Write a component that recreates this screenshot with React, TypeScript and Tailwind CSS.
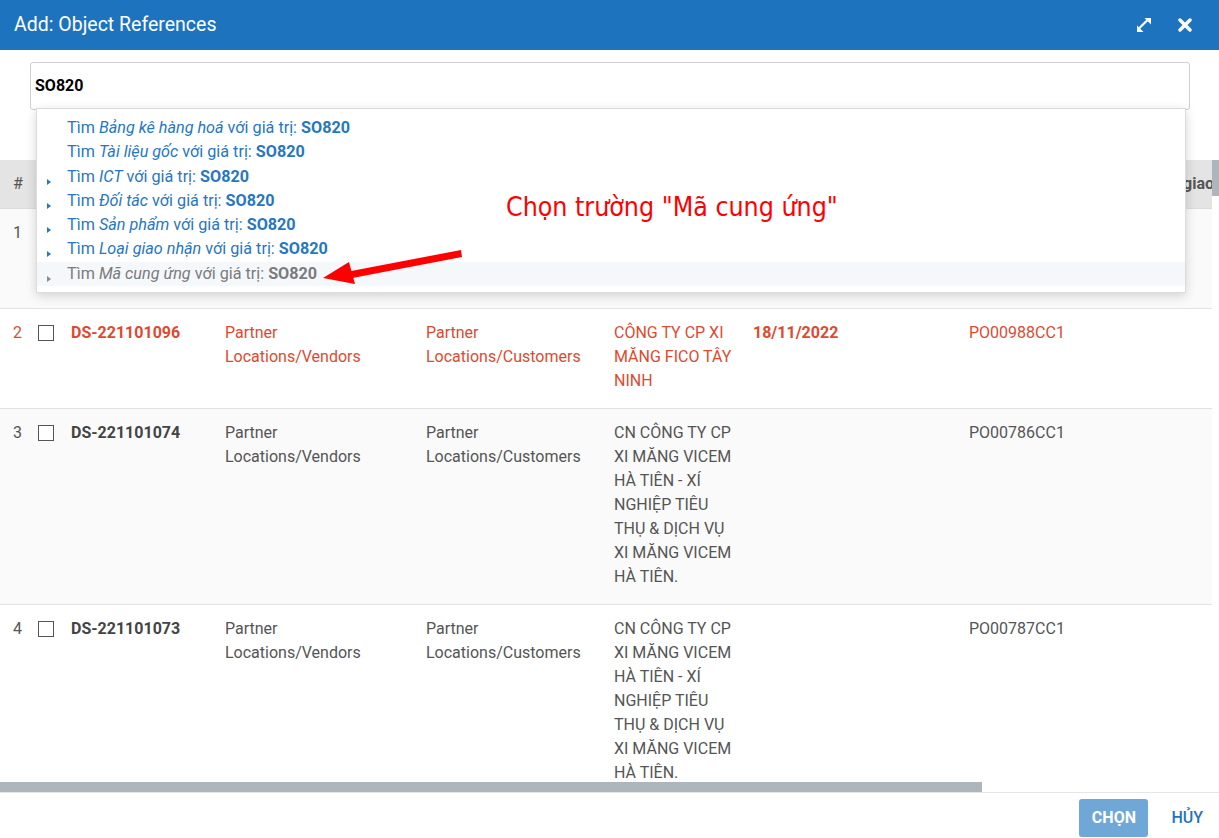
import React from "react"

type Row = {
    n: number
    id: string
    from: string
    to: string
    company: string
    date: string
    po: string
    red?: boolean
}

const rows: Row[] = [
    { n: 1, id: "DS-221101112", from: "Partner Locations/Vendors", to: "Partner Locations/Customers", company: "CÔNG TY CP XI MĂNG FICO TÂY NINH", date: "", po: "PO00990CC1" },
    { n: 2, id: "DS-221101096", from: "Partner Locations/Vendors", to: "Partner Locations/Customers", company: "CÔNG TY CP XI MĂNG FICO TÂY NINH", date: "18/11/2022", po: "PO00988CC1", red: true },
    { n: 3, id: "DS-221101074", from: "Partner Locations/Vendors", to: "Partner Locations/Customers", company: "CN CÔNG TY CP XI MĂNG VICEM HÀ TIÊN - XÍ NGHIỆP TIÊU THỤ & DỊCH VỤ XI MĂNG VICEM HÀ TIÊN.", date: "", po: "PO00786CC1" },
    { n: 4, id: "DS-221101073", from: "Partner Locations/Vendors", to: "Partner Locations/Customers", company: "CN CÔNG TY CP XI MĂNG VICEM HÀ TIÊN - XÍ NGHIỆP TIÊU THỤ & DỊCH VỤ XI MĂNG VICEM HÀ TIÊN.", date: "", po: "PO00787CC1" },
]

const suggestions = [
    { field: "Bảng kê hàng hoá", caret: false },
    { field: "Tài liệu gốc", caret: false },
    { field: "ICT", caret: true },
    { field: "Đối tác", caret: true },
    { field: "Sản phẩm", caret: true },
    { field: "Loại giao nhận", caret: true },
    { field: "Mã cung ứng", caret: true, active: true },
]

const cols = "grid grid-cols-[30px_29px_154px_201px_188px_139px_216px_214px_200px]"

export default function App() {
    return (
        <div
            className="relative w-[1219px] h-[838px] flex flex-col bg-white overflow-hidden text-[16px]"
            style={{ fontFamily: "Roboto, 'Noto Sans', sans-serif" }}
        >
            {/* Header */}
            <div className="h-[50px] shrink-0 bg-[#1e73be] flex items-center justify-between pl-[14px] pr-[27px]">
                <span className="text-white text-[19.5px]">Add: Object References</span>
                <div className="flex items-center gap-[26px]">
                    <svg width="16" height="16" viewBox="0 0 16 16" fill="white">
                        <path d="M3.2 11.3 L11.3 3.2" stroke="white" strokeWidth="2.2" />
                        <path d="M8.5 1 H15 V7.5 Z" />
                        <path d="M1 8.5 V15 H7.5 Z" />
                    </svg>
                    <svg width="14" height="14" viewBox="0 0 14 14">
                        <path d="M2 2 L12 12 M12 2 L2 12" stroke="white" strokeWidth="3.4" strokeLinecap="round" />
                    </svg>
                </div>
            </div>

            {/* Search */}
            <div className="relative shrink-0 pt-[12px] pl-[30px] pr-[29px]">
                <div className="h-[48px] border border-[#cfcfcf] rounded-[3px] flex items-center pl-[4px] font-bold text-black">
                    SO820
                </div>
                <div className="h-[50px] pl-[29px] pt-[6px]">
                    <svg width="11" height="11" viewBox="0 0 10 10">
                        <path d="M0 0 H10 L6 4.5 V10 L4 8.5 V4.5 Z" fill="#444" />
                    </svg>
                </div>

                {/* Dropdown */}
                <div className="absolute z-20 left-[36px] top-[58px] w-[1150px] bg-white border border-[#dcdcdc] shadow-[0_3px_10px_rgba(0,0,0,0.16)] pt-[7px] pb-[6px]">
                    {suggestions.map((s) => (
                        <div
                            key={s.field}
                            className={`relative h-[24.3px] flex items-center pl-[30px] text-[16.2px] ${s.active ? "bg-[#f4f8fb] text-[#7b7b7b]" : "text-[#2777bf]"}`}
                        >
                            {s.caret && (
                                <span
                                    className={`absolute left-[10px] top-[14px] w-0 h-0 border-y-[3px] border-y-transparent border-l-[4px] ${s.active ? "border-l-[#8a8a8a]" : "border-l-[#2777bf]"}`}
                                />
                            )}
                            <span>
                                Tìm <i>{s.field}</i> với giá trị: <b>SO820</b>
                            </span>
                        </div>
                    ))}
                </div>
            </div>

            {/* Table */}
            <div className="relative flex-1 overflow-hidden">
                <div className="w-[1212px] overflow-hidden">
                    <div className="w-[1371px]">
                        <div className={`${cols} h-[49px] bg-[#e4e4e4] border-b border-[#dcdcdc] items-center font-bold text-[#555]`}>
                            <div className="pl-[13px] font-normal">#</div>
                            <div />
                            <div className="pl-3">Mã</div>
                            <div className="pl-3">Từ</div>
                            <div className="pl-3">Đến</div>
                            <div className="pl-3">Đối tác</div>
                            <div className="pl-3">Ngày</div>
                            <div className="pl-3">Mã cung ứng</div>
                            <div className="pl-3 whitespace-nowrap">giao nhận</div>
                        </div>

                        {rows.map((r) => (
                            <div
                                key={r.n}
                                className={`${cols} pt-3 pb-[15px] border-b border-[#e2e2e2] leading-[24px] ${r.n % 2 === 1 ? "bg-[#fafafa]" : "bg-white"} ${r.red ? "text-[#de4a2f]" : "text-[#555]"}`}
                            >
                                <div className="pl-[13px]">{r.n}</div>
                                <div className="pl-2 h-[24px] flex items-center">
                                    <span className="block w-[16px] h-[16px] border border-[#555] bg-white" />
                                </div>
                                <div className={`pl-3 font-bold ${r.red ? "" : "text-[#444]"}`}>{r.id}</div>
                                <div className="pl-3">{r.from}</div>
                                <div className="pl-3">{r.to}</div>
                                <div className="pl-3">{r.company}</div>
                                <div className="pl-3 font-bold">{r.date}</div>
                                <div className="pl-3">{r.po}</div>
                                <div />
                            </div>
                        ))}
                    </div>
                </div>

                {/* scrollbars */}
                <div className="absolute right-0 top-0 w-[7px] h-[36px] bg-[#adb5bd]" />
                <div className="absolute left-0 bottom-0 w-[982px] h-[10px] bg-[#adb5bd]" />
            </div>

            {/* Footer */}
            <div className="h-[46px] shrink-0 border-t border-[#e6e6e6] flex items-start justify-end pt-[6px]">
                <button className="h-[38px] w-[69px] rounded-[3px] bg-[#6fa7d6] text-white font-bold">CHỌN</button>
                <button className="h-[38px] ml-[7px] px-[16px] text-[#1e73be] font-medium">HỦY</button>
            </div>

            {/* Annotation */}
            <div
                className="absolute z-30 left-[506px] top-[187px] text-[#ff0000] text-[26.5px] whitespace-nowrap"
                style={{ fontFamily: "'DejaVu Sans Condensed', 'DejaVu Sans', sans-serif" }}
            >
                Chọn trường "Mã cung ứng"
            </div>
            <svg className="absolute z-30 left-0 top-0 pointer-events-none" width="1219" height="838">
                <path d="M461 250 L346 272 L347 279 L462 257 Z" fill="#ff0000" />
                <path d="M323 278 L349 262 L355 284 Z" fill="#ff0000" />
            </svg>
        </div>
    )
}
